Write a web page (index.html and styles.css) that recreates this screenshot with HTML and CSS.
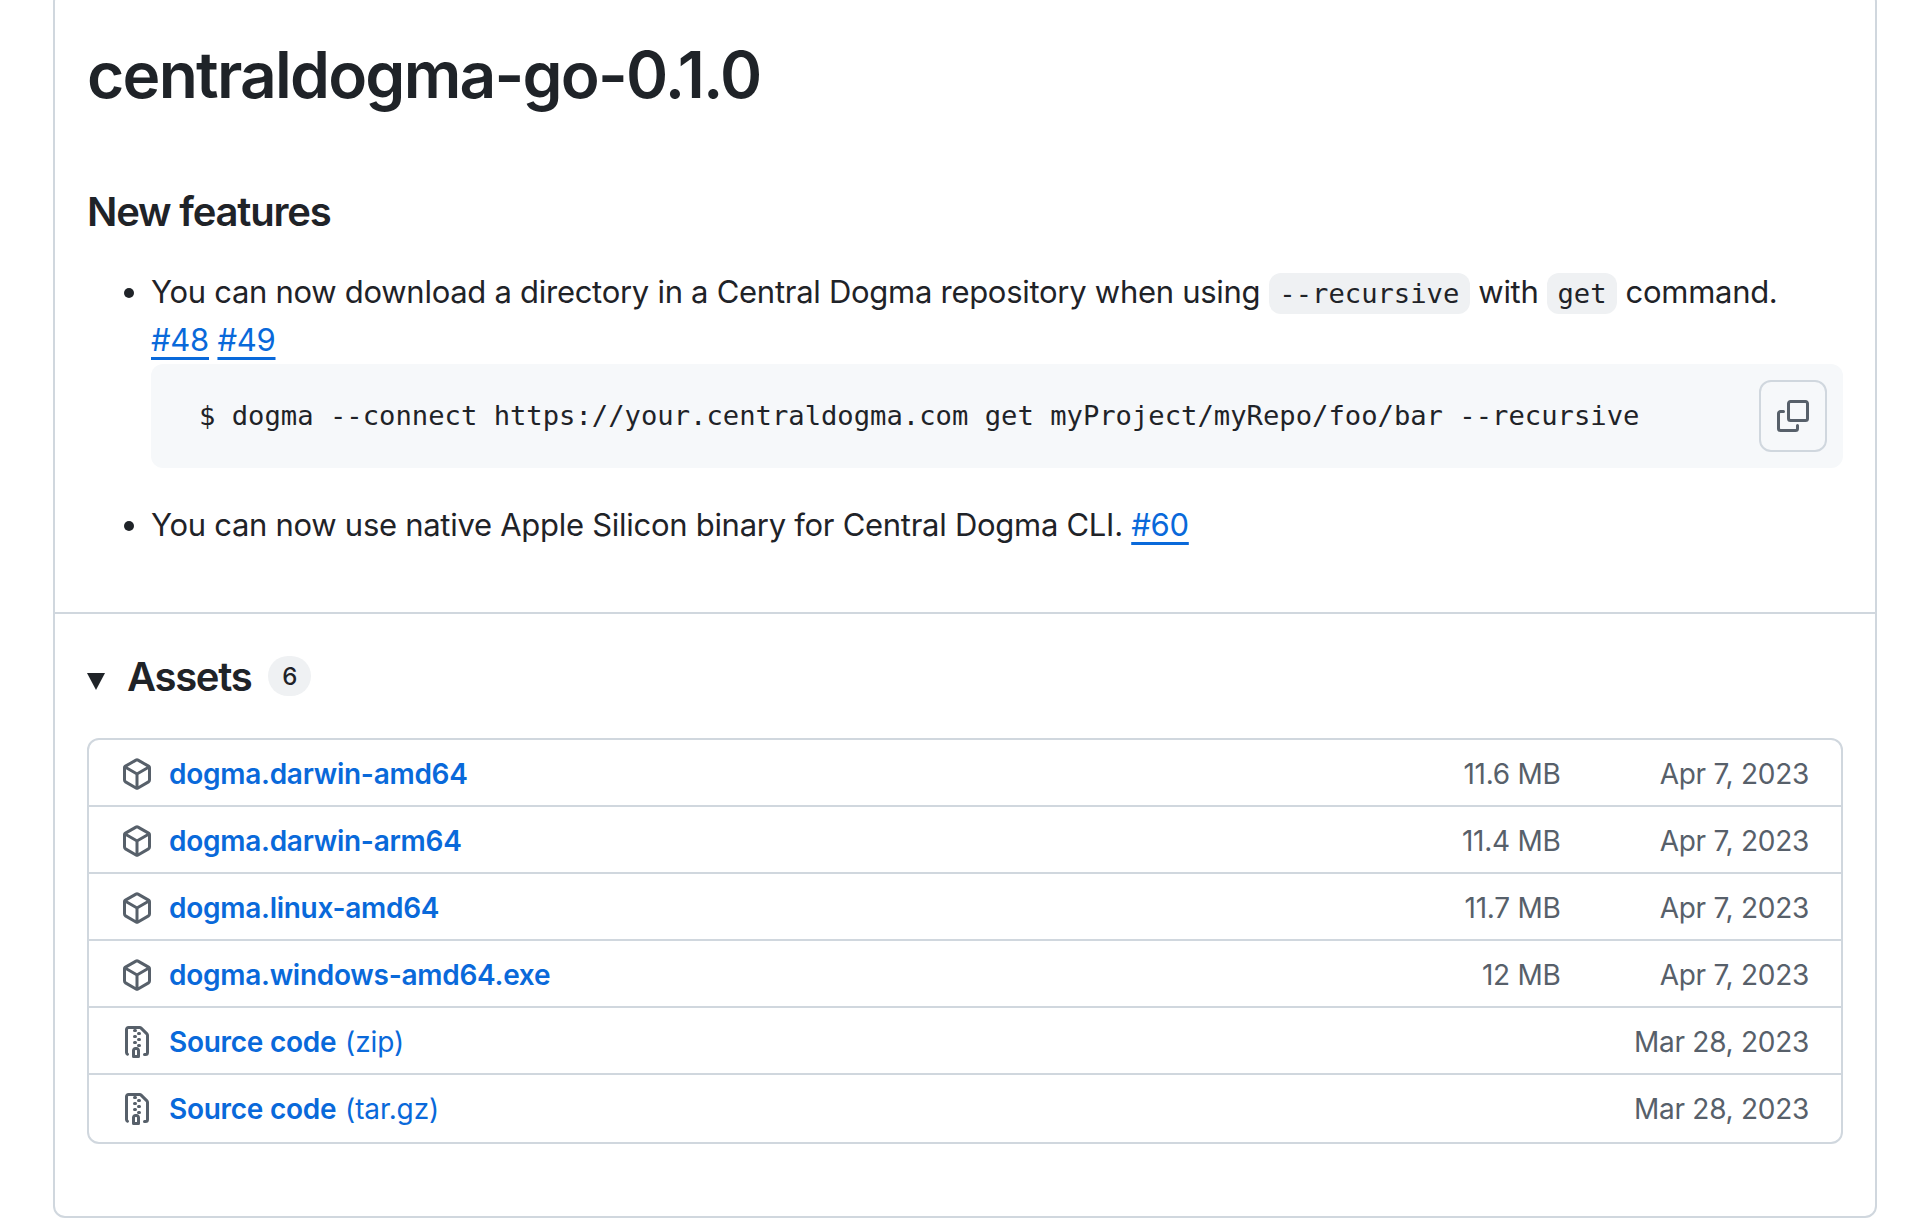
FILE: index.html
```html
<!DOCTYPE html>
<html lang="en">
<head>
<meta charset="utf-8">
<title>centraldogma-go-0.1.0</title>
<link rel="stylesheet" href="styles.css">
</head>
<body>
<main class="card">
  <section class="body">
    <h1 class="title">centraldogma-go-0.1.0</h1>
    <h2 class="subtitle">New features</h2>
    <ul class="features">
      <li>You can now download a directory in a Central Dogma repository when using <code class="inline">--recursive</code> with <code class="inline">get</code> command. <span class="refs"><a class="link" href="#">#48</a> <a class="link" href="#">#49</a></span>
        <div class="snippet">
          <pre class="snippet-code">$ dogma --connect https://your.centraldogma.com get myProject/myRepo/foo/bar --recursive</pre>
          <button class="copy" type="button" aria-label="Copy">
            <svg class="copy-icon" viewBox="0 0 16 16"><path d="M0 6.75C0 5.784.784 5 1.75 5h1.5a.75.75 0 0 1 0 1.5h-1.5a.25.25 0 0 0-.25.25v7.5c0 .138.112.25.25.25h7.5a.25.25 0 0 0 .25-.25v-1.5a.75.75 0 0 1 1.5 0v1.5A1.75 1.75 0 0 1 9.25 16h-7.5A1.75 1.75 0 0 1 0 14.25Z"/><path d="M5 1.75C5 .784 5.784 0 6.75 0h7.5C15.216 0 16 .784 16 1.75v7.5A1.75 1.75 0 0 1 14.25 11h-7.5A1.75 1.75 0 0 1 5 9.25Zm1.75-.25a.25.25 0 0 0-.25.25v7.5c0 .138.112.25.25.25h7.5a.25.25 0 0 0 .25-.25v-7.5a.25.25 0 0 0-.25-.25Z"/></svg>
          </button>
        </div>
      </li>
      <li>You can now use native Apple Silicon binary for Central Dogma CLI. <a class="link" href="#">#60</a></li>
    </ul>
  </section>
  <section class="assets">
    <div class="assets-head">
      <span class="caret"></span>
      <span class="assets-title">Assets</span>
      <span class="badge">6</span>
    </div>
    <ul class="asset-list">
      <li class="asset"><svg class="asset-icon" viewBox="0 0 16 16"><use href="#pkg"/></svg><a class="asset-name" href="#">dogma.darwin-amd64</a><span class="asset-size">11.6 MB</span><span class="asset-date">Apr 7, 2023</span></li>
      <li class="asset"><svg class="asset-icon" viewBox="0 0 16 16"><use href="#pkg"/></svg><a class="asset-name" href="#">dogma.darwin-arm64</a><span class="asset-size">11.4 MB</span><span class="asset-date">Apr 7, 2023</span></li>
      <li class="asset"><svg class="asset-icon" viewBox="0 0 16 16"><use href="#pkg"/></svg><a class="asset-name" href="#">dogma.linux-amd64</a><span class="asset-size">11.7 MB</span><span class="asset-date">Apr 7, 2023</span></li>
      <li class="asset"><svg class="asset-icon" viewBox="0 0 16 16"><use href="#pkg"/></svg><a class="asset-name" href="#">dogma.windows-amd64.exe</a><span class="asset-size">12 MB</span><span class="asset-date">Apr 7, 2023</span></li>
      <li class="asset"><svg class="asset-icon" viewBox="0 0 16 16"><use href="#zip"/></svg><a class="asset-name" href="#">Source code <span class="asset-ext">(zip)</span></a><span class="asset-size"></span><span class="asset-date">Mar 28, 2023</span></li>
      <li class="asset"><svg class="asset-icon" viewBox="0 0 16 16"><use href="#zip"/></svg><a class="asset-name" href="#">Source code <span class="asset-ext">(tar.gz)</span></a><span class="asset-size"></span><span class="asset-date">Mar 28, 2023</span></li>
    </ul>
  </section>
</main>
<svg class="defs" aria-hidden="true">
  <symbol id="pkg" viewBox="0 0 16 16"><path d="m8.878.392 5.25 3.045c.54.314.872.89.872 1.514v6.098a1.75 1.75 0 0 1-.872 1.514l-5.25 3.045a1.75 1.75 0 0 1-1.756 0l-5.25-3.045A1.75 1.75 0 0 1 1 11.049V4.951c0-.624.332-1.201.872-1.514L7.122.392a1.75 1.75 0 0 1 1.756 0ZM7.875 1.69l-4.63 2.685L8 7.133l4.755-2.758-4.63-2.685a.248.248 0 0 0-.25 0ZM2.5 5.677v5.372c0 .09.047.171.125.216l4.625 2.683V8.432Zm6.25 8.271 4.625-2.683a.25.25 0 0 0 .125-.216V5.677L8.75 8.432Z"/></symbol>
  <symbol id="zip" viewBox="0 0 16 16"><path d="M3.5 1.75v11.5c0 .09.048.173.126.217a.75.75 0 0 1-.752 1.298A1.748 1.748 0 0 1 2 13.25V1.75C2 .784 2.784 0 3.75 0h5.586c.464 0 .909.185 1.237.513l2.914 2.914c.329.328.513.773.513 1.237v8.586A1.75 1.75 0 0 1 12.25 15h-.5a.75.75 0 0 1 0-1.5h.5a.25.25 0 0 0 .25-.25V4.664a.25.25 0 0 0-.073-.177L9.513 1.573a.25.25 0 0 0-.177-.073H7.25a.75.75 0 0 1 0 1.5h-.5a.75.75 0 0 1 0-1.5h-3a.25.25 0 0 0-.25.25Zm3.75 8.75h.5c.966 0 1.75.784 1.75 1.75v3a.75.75 0 0 1-.75.75h-2.5a.75.75 0 0 1-.75-.75v-3c0-.966.784-1.75 1.75-1.75ZM6 5.25a.75.75 0 0 1 .75-.75h.5a.75.75 0 0 1 0 1.5h-.5A.75.75 0 0 1 6 5.25Zm.75 2.25h.5a.75.75 0 0 1 0 1.5h-.5a.75.75 0 0 1 0-1.5ZM8 6.75A.75.75 0 0 1 8.75 6h.5a.75.75 0 0 1 0 1.5h-.5A.75.75 0 0 1 8 6.75ZM8.75 3h.5a.75.75 0 0 1 0 1.5h-.5a.75.75 0 0 1 0-1.5ZM8 9.75A.75.75 0 0 1 8.75 9h.5a.75.75 0 0 1 0 1.5h-.5A.75.75 0 0 1 8 9.75Zm-1 2.5v2.25h1v-2.25a.25.25 0 0 0-.25-.25h-.5a.25.25 0 0 0-.25.25Z"/></symbol>
</svg>
</body>
</html>
```
FILE: styles.css
```css
* { box-sizing: border-box; }
html, body { margin: 0; padding: 0; background: #fff; overflow: hidden; }
body { height: 1232px; font-family: Inter, "Noto Sans", sans-serif; color: #1f2328; }
.defs { display: none; }
.card {
  width: 1824px;
  height: 1228px;
  margin: -10px 0 0 53px;
  border: 2px solid #d0d7de;
  border-radius: 12px;
  background: #fff;
}
.body { height: 622px; padding: 43px 32px 0; border-bottom: 2px solid #d0d7de; }
.title { margin: 0; font-size: 64px; line-height: 80px; font-weight: 600; letter-spacing: -1.75px; }
.subtitle { margin: 72px 0 0; font-size: 40px; line-height: 50px; font-weight: 600; letter-spacing: -1.2px; }
.features { margin: 31px 0 0; padding: 0 0 0 64px; font-size: 31px; line-height: 48px; letter-spacing: -0.28px; }
.features li + li { margin-top: 33px; }
.refs { white-space: nowrap; }
.inline {
  font-family: "DejaVu Sans Mono", monospace;
  font-size: 27.2px;
  line-height: 1;
  letter-spacing: 0;
  padding: 5px 10.5px;
  border-radius: 12px;
  background: #eff1f3;
}
.link { color: #0969da; text-decoration: underline; text-decoration-thickness: 3px; text-underline-offset: 6px; }
.snippet {
  display: flex;
  align-items: center;
  justify-content: space-between;
  height: 104px;
  padding: 0 16px 0 48px;
  border-radius: 12px;
  background: #f6f8fa;
}
.snippet-code { margin: 0; font-family: "DejaVu Sans Mono", monospace; font-size: 27.2px; line-height: 40px; letter-spacing: 0; }
.copy {
  display: flex;
  align-items: center;
  justify-content: center;
  width: 68px;
  height: 72px;
  padding: 0;
  border: 2px solid #d0d7de;
  border-radius: 12px;
  background: #f6f8fa;
}
.copy-icon { width: 32px; height: 32px; fill: #57606a; }
.assets { padding: 0 32px; }
.assets-head { display: flex; align-items: center; height: 124px; }
.caret { width: 0; height: 0; border-style: solid; border-width: 17px 9px 0; border-color: #1f2328 transparent transparent; margin: 10px 22px 0 0; }
.assets-title { font-size: 40px; font-weight: 600; letter-spacing: -1.3px; }
.badge {
  display: flex; align-items: center; justify-content: center;
  width: 43px; height: 40px; margin-left: 17px;
  border-radius: 20px; background: #eff1f3; font-size: 24px; font-weight: 500;
}
.asset-list { margin: 0; padding: 0; list-style: none; border: 2px solid #d0d7de; border-radius: 12px; }
.asset { display: flex; align-items: center; height: 67px; padding: 2px 32px 0; border-top: 2px solid #d0d7de; font-size: 28px; letter-spacing: -0.27px; }
.asset:first-child { border-top: 0; height: 65px; }
.asset:last-child { height: 69px; padding-bottom: 2px; }
.asset-icon { width: 32px; height: 32px; margin-right: 16px; fill: #57606a; flex: none; }
.asset-name { flex: 1; color: #0969da; font-weight: 600; text-decoration: none; }
.asset-ext { font-weight: 400; margin-left: 2px; letter-spacing: -0.1px; }
.asset-size { width: 200px; margin-right: -1.5px; text-align: right; color: #57606a; }
.asset-date { width: 250px; text-align: right; color: #57606a; }
```
